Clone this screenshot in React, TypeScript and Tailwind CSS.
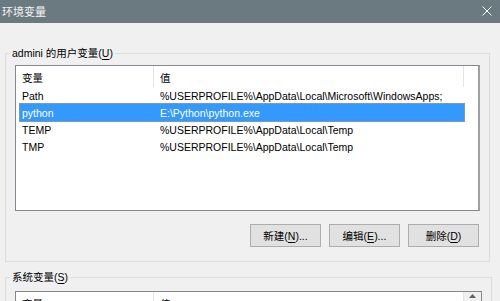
import React from "react";

const font = { fontFamily: '"Liberation Sans", "Noto Sans CJK SC", sans-serif' };

function U({ c }: { c: string }) {
  return <span className="underline underline-offset-[2px]">{c}</span>;
}

const rows = [
  { n: "Path", v: "%USERPROFILE%\\AppData\\Local\\Microsoft\\WindowsApps;" },
  { n: "python", v: "E:\\Python\\python.exe", sel: true },
  { n: "TEMP", v: "%USERPROFILE%\\AppData\\Local\\Temp" },
  { n: "TMP", v: "%USERPROFILE%\\AppData\\Local\\Temp" },
];

function Header() {
  return (
    <div className="flex h-[21px] items-center text-black">
      <div className="flex h-full w-[134px] shrink-0 items-center border-r border-[#e5e5e5] pl-[2px] pt-[2px]">变量</div>
      <div className="flex h-full w-[310px] shrink-0 items-center border-r border-[#e5e5e5] pl-[6px] pt-[2px]">值</div>
    </div>
  );
}

function Btn({ children }: { children: React.ReactNode }) {
  return (
    <div className="flex h-[23px] w-[71px] items-center justify-center border border-[#adadad] bg-[#e1e1e1] text-black">
      {children}
    </div>
  );
}

export default function App() {
  return (
    <div className="h-[301px] w-[500px] overflow-hidden bg-[#f0f0f0] text-[10.5px] leading-[16px]" style={font}>
      <div className="flex h-[23px] items-center justify-between bg-[#6b7a80] pl-[2px] pr-[8px] text-white">
        <span className="text-[11px] text-[#f4f4f4]">环境变量</span>
        <svg width="10" height="10" viewBox="0 0 10 10" className="mt-[-2px]">
          <path d="M0.5 0.5 L9.5 9.5 M9.5 0.5 L0.5 9.5" stroke="#ffffff" strokeWidth="1" fill="none" />
        </svg>
      </div>

      <fieldset className="ml-[5px] mr-[10px] mt-[22px] border border-[#dcdcdc] pb-[14px]">
        <legend className="ml-[4px] px-[2px] text-black">
          admini 的用户变量(<U c="U" />)
        </legend>
        <div className="px-[9px] pt-[4px]">
          <div className="h-[146px] border border-[#828790] border-r-[2px] border-r-[#a0a0a0] bg-white">
            <div className="pl-[4px]">
              <Header />
              {rows.map((r) => (
                <div
                  key={r.n}
                  className={
                    "flex h-[17px] w-[444px] items-center whitespace-nowrap " +
                    (r.sel ? "bg-[#3399ff] text-white outline outline-1 outline-[#7a9ab8]" : "text-black")
                  }
                >
                  <div className="w-[134px] shrink-0 pl-[2px]">{r.n}</div>
                  <div className="shrink-0 pl-[6px]">{r.v}</div>
                </div>
              ))}
            </div>
          </div>
          <div className="mt-[13px] flex justify-end gap-[8px] pr-[1px]">
            <Btn>
              新建(<U c="N" />)...
            </Btn>
            <Btn>
              编辑(<U c="E" />)...
            </Btn>
            <Btn>
              删除(<U c="D" />)
            </Btn>
          </div>
        </div>
      </fieldset>

      <fieldset className="ml-[5px] mr-[10px] mt-[7px] border border-[#dcdcdc]">
        <legend className="ml-[4px] px-[2px] text-black">
          系统变量(<U c="S" />)
        </legend>
        <div className="px-[9px] pt-[6px]">
          <div className="h-[60px] border border-[#828790] bg-white">
            <div className="flex">
              <div className="flex-1 pl-[4px]">
                <Header />
              </div>
              <div className="flex w-[17px] justify-center bg-[#f0f0f0] pt-[2px]">
                <svg width="7" height="4" viewBox="0 0 7 4">
                  <path d="M0 4 L3.5 0 L7 4 Z" fill="#606060" />
                </svg>
              </div>
            </div>
          </div>
        </div>
      </fieldset>
    </div>
  );
}
